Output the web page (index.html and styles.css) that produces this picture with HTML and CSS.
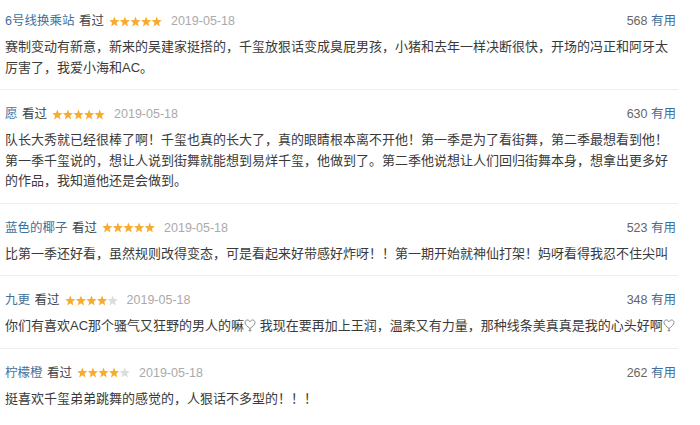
FILE: index.html
```html
<!DOCTYPE html>
<html lang="zh-CN">
<head>
    <meta charset="UTF-8">
    <meta name="viewport" content="width=device-width, initial-scale=1.0">
    <title>短评</title>
    <link rel="stylesheet" href="styles.css">
</head>
<body>
    <svg class="defs" width="0" height="0">
        <defs>
            <symbol id="star" viewBox="0 0 10 10">
                <polygon points="5,0.4 6.25,3.7 9.8,3.85 7.05,6.1 8,9.6 5,7.6 2,9.6 2.95,6.1 0.2,3.85 3.75,3.7"/>
            </symbol>
            <symbol id="heart" viewBox="0 0 12 14">
                <path d="M6 9.6 C3.5 7.6 1 5.6 1 3.5 C1 2 2.1 1 3.4 1 C4.6 1 5.5 1.8 6 2.8 C6.5 1.8 7.4 1 8.6 1 C9.9 1 11 2 11 3.5 C11 5.6 8.5 7.6 6 9.6 Z M6 9.6 L6 12.6 M4.6 11.4 L7.4 11.4" fill="none" stroke="#8a8a8a" stroke-width="1"/>
            </symbol>
        </defs>
    </svg>

    <div class="comments">
        <div class="comment">
            <div class="comment-info">
                <a class="user">6号线换乘站</a>
                <span class="watched">看过</span>
                <span class="rating">
                    <svg width="53" height="11"><use href="#star" x="0" width="10.6" height="11"/><use href="#star" x="10.6" width="10.6" height="11"/><use href="#star" x="21.2" width="10.6" height="11"/><use href="#star" x="31.8" width="10.6" height="11"/><use href="#star" x="42.4" width="10.6" height="11"/></svg>
                </span>
                <span class="date">2019-05-18</span>
                <span class="votes"><span class="count">568</span> <a class="useful">有用</a></span>
            </div>
            <p class="text">赛制变动有新意，新来的吴建家挺搭的，千玺放狠话变成臭屁男孩，小猪和去年一样决断很快，开场的冯正和阿牙太厉害了，我爱小海和AC。</p>
        </div>

        <div class="comment">
            <div class="comment-info">
                <a class="user">愿</a>
                <span class="watched">看过</span>
                <span class="rating">
                    <svg width="53" height="11"><use href="#star" x="0" width="10.6" height="11"/><use href="#star" x="10.6" width="10.6" height="11"/><use href="#star" x="21.2" width="10.6" height="11"/><use href="#star" x="31.8" width="10.6" height="11"/><use href="#star" x="42.4" width="10.6" height="11"/></svg>
                </span>
                <span class="date">2019-05-18</span>
                <span class="votes"><span class="count">630</span> <a class="useful">有用</a></span>
            </div>
            <p class="text">队长大秀就已经很棒了啊！千玺也真的长大了，真的眼睛根本离不开他！第一季是为了看街舞，第二季最想看到他！第一季千玺说的，想让人说到街舞就能想到易烊千玺，他做到了。第二季他说想让人们回归街舞本身，想拿出更多好的作品，我知道他还是会做到。</p>
        </div>

        <div class="comment">
            <div class="comment-info">
                <a class="user">蓝色的椰子</a>
                <span class="watched">看过</span>
                <span class="rating">
                    <svg width="53" height="11"><use href="#star" x="0" width="10.6" height="11"/><use href="#star" x="10.6" width="10.6" height="11"/><use href="#star" x="21.2" width="10.6" height="11"/><use href="#star" x="31.8" width="10.6" height="11"/><use href="#star" x="42.4" width="10.6" height="11"/></svg>
                </span>
                <span class="date">2019-05-18</span>
                <span class="votes"><span class="count">523</span> <a class="useful">有用</a></span>
            </div>
            <p class="text">比第一季还好看，虽然规则改得变态，可是看起来好带感好炸呀！！第一期开始就神仙打架！妈呀看得我忍不住尖叫</p>
        </div>

        <div class="comment">
            <div class="comment-info">
                <a class="user">九更</a>
                <span class="watched">看过</span>
                <span class="rating">
                    <svg width="53" height="11"><use href="#star" x="0" width="10.6" height="11"/><use href="#star" x="10.6" width="10.6" height="11"/><use href="#star" x="21.2" width="10.6" height="11"/><use href="#star" x="31.8" width="10.6" height="11"/><use class="off" href="#star" x="42.4" width="10.6" height="11"/></svg>
                </span>
                <span class="date">2019-05-18</span>
                <span class="votes"><span class="count">348</span> <a class="useful">有用</a></span>
            </div>
            <p class="text">你们有喜欢AC那个骚气又狂野的男人的嘛<svg class="heart" width="12" height="14"><use href="#heart"/></svg> 我现在要再加上王润，温柔又有力量，那种线条美真真是我的心头好啊<svg class="heart" width="12" height="14"><use href="#heart"/></svg></p>
        </div>

        <div class="comment">
            <div class="comment-info">
                <a class="user">柠檬橙</a>
                <span class="watched">看过</span>
                <span class="rating">
                    <svg width="53" height="11"><use href="#star" x="0" width="10.6" height="11"/><use href="#star" x="10.6" width="10.6" height="11"/><use href="#star" x="21.2" width="10.6" height="11"/><use href="#star" x="31.8" width="10.6" height="11"/><use class="off" href="#star" x="42.4" width="10.6" height="11"/></svg>
                </span>
                <span class="date">2019-05-18</span>
                <span class="votes"><span class="count">262</span> <a class="useful">有用</a></span>
            </div>
            <p class="text">挺喜欢千玺弟弟跳舞的感觉的，人狠话不多型的！！！</p>
        </div>
    </div>
</body>
</html>
```

FILE: styles.css
```css
* {
    margin: 0;
    padding: 0;
    box-sizing: border-box;
}

body {
    background: #fff;
    color: #3a3a3a;
    font-family: 'Liberation Sans', 'Noto Sans CJK SC', sans-serif;
    font-size: 13px;
}

.defs {
    position: absolute;
}

.comments {
    width: 678px;
}

.comment {
    padding: 14px 1px 11px 5px;
    border-bottom: 1px solid #eeeeee;
}

.comment:first-child {
    padding-top: 11px;
}

.comment:last-child {
    border-bottom: none;
}

.comment-info {
    display: flex;
    align-items: center;
    height: 20px;
    line-height: 20px;
    font-size: 12.5px;
    white-space: nowrap;
    margin-right: 1px;
}

.user {
    color: #3f6f99;
    margin-right: 4.5px;
}

.watched {
    color: #444;
    margin-right: 5px;
}

.rating {
    display: flex;
    margin-right: 9px;
}

.rating svg {
    fill: #f7ac2f;
}

.rating .off {
    fill: #dcdcdc;
}

.date {
    color: #aaa;
}

.votes {
    margin-left: auto;
}

.count {
    color: #666;
}

.useful {
    color: #3f6f99;
}

.text {
    margin-top: 6px;
    margin-right: -3px;
    line-height: 20.5px;
}

.heart {
    vertical-align: -3px;
}
```
